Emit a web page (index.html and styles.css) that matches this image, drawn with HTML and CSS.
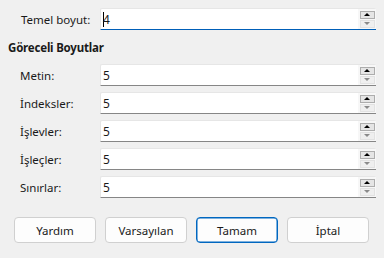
FILE: index.html
```html
<!DOCTYPE html>
<html lang="tr">
<head>
  <meta charset="UTF-8" />
  <title>Yazı Tipi Boyutları</title>
  <link rel="stylesheet" href="styles.css">
</head>
<body>
  <div class="dialog">
    <div class="row">
      <label class="label first">Temel boyut:</label>
      <div class="field focused">
        <span class="value"><span class="caret"></span>4</span>
        <div class="spin">
          <span class="up"></span>
          <span class="down"></span>
        </div>
      </div>
    </div>

    <h2 class="heading">Göreceli Boyutlar</h2>

    <div class="row">
      <label class="label">Metin:</label>
      <div class="field"><span class="value">5</span>
        <div class="spin"><span class="up"></span><span class="down"></span></div>
      </div>
    </div>
    <div class="row">
      <label class="label">İndeksler:</label>
      <div class="field"><span class="value">5</span>
        <div class="spin"><span class="up"></span><span class="down"></span></div>
      </div>
    </div>
    <div class="row">
      <label class="label">İşlevler:</label>
      <div class="field"><span class="value">5</span>
        <div class="spin"><span class="up"></span><span class="down"></span></div>
      </div>
    </div>
    <div class="row">
      <label class="label">İşleçler:</label>
      <div class="field"><span class="value">5</span>
        <div class="spin"><span class="up"></span><span class="down"></span></div>
      </div>
    </div>
    <div class="row">
      <label class="label">Sınırlar:</label>
      <div class="field"><span class="value">5</span>
        <div class="spin"><span class="up"></span><span class="down"></span></div>
      </div>
    </div>

    <div class="buttons">
      <button>Yardım</button>
      <button>Varsayılan</button>
      <button class="default">Tamam</button>
      <button>İptal</button>
    </div>
  </div>
</body>
</html>
```

FILE: styles.css
```css
* {
  box-sizing: border-box;
}

body {
  margin: 0;
  background: #f0f0f0;
  font-family: "Noto Sans", "Open Sans", sans-serif;
  font-size: 11.5px;
  color: #1a1a1a;
}

.dialog {
  padding: 8px 8px 0 8px;
}

.row {
  display: grid;
  grid-template-columns: 92px 1fr;
  align-items: center;
  margin-bottom: 6px;
}

.label {
  padding-left: 12px;
}

.label.first {
  padding-left: 13px;
}

.field {
  height: 22px;
  display: flex;
  align-items: center;
  justify-content: space-between;
  background: #fff;
  border: 1px solid #e6e6e6;
  border-bottom: 1px solid #868686;
  border-right: none;
  border-radius: 2px 2px 0 0;
  font-size: 12px;
}

.field.focused {
  border-bottom-color: #005fb8;
}

.value {
  padding-left: 2px;
  display: flex;
  align-items: center;
}

.caret {
  display: inline-block;
  width: 1px;
  height: 15px;
  background: #000;
  margin-right: -1px;
}

.spin {
  width: 18px;
  height: 100%;
  background: #f7f7f7;
  display: flex;
  flex-direction: column;
  align-items: center;
  justify-content: center;
  gap: 1px;
}

.spin span {
  width: 15px;
  height: 8px;
  display: flex;
  align-items: center;
  justify-content: center;
}

.spin .up {
  background: #e5e5e5;
  border: 1px solid #adadad;
}

.spin .down {
  background: #efefef;
  border: 1px solid #e2e2e2;
}

.spin .up::after {
  content: "";
  border-left: 3px solid transparent;
  border-right: 3px solid transparent;
  border-bottom: 3px solid #000;
}

.spin .down::after {
  content: "";
  border-left: 3px solid transparent;
  border-right: 3px solid transparent;
  border-top: 3px solid #8a8a8a;
}

.heading {
  font-size: 11.5px;
  font-weight: bold;
  margin: 10px 0 8px 0;
  line-height: 16px;
  letter-spacing: -0.2px;
}

.buttons {
  display: flex;
  gap: 9px;
  padding-left: 6px;
  margin-top: 19px;
}

.buttons button {
  width: 82px;
  height: 26px;
  font-family: inherit;
  font-size: 11.5px;
  color: #1a1a1a;
  background: #fdfdfd;
  border: 1px solid #d0d0d0;
  border-radius: 4px;
}

.buttons button.default {
  border: 1px solid #0067c0;
  box-shadow: inset 0 0 0 0.5px #0067c0;
}
```
